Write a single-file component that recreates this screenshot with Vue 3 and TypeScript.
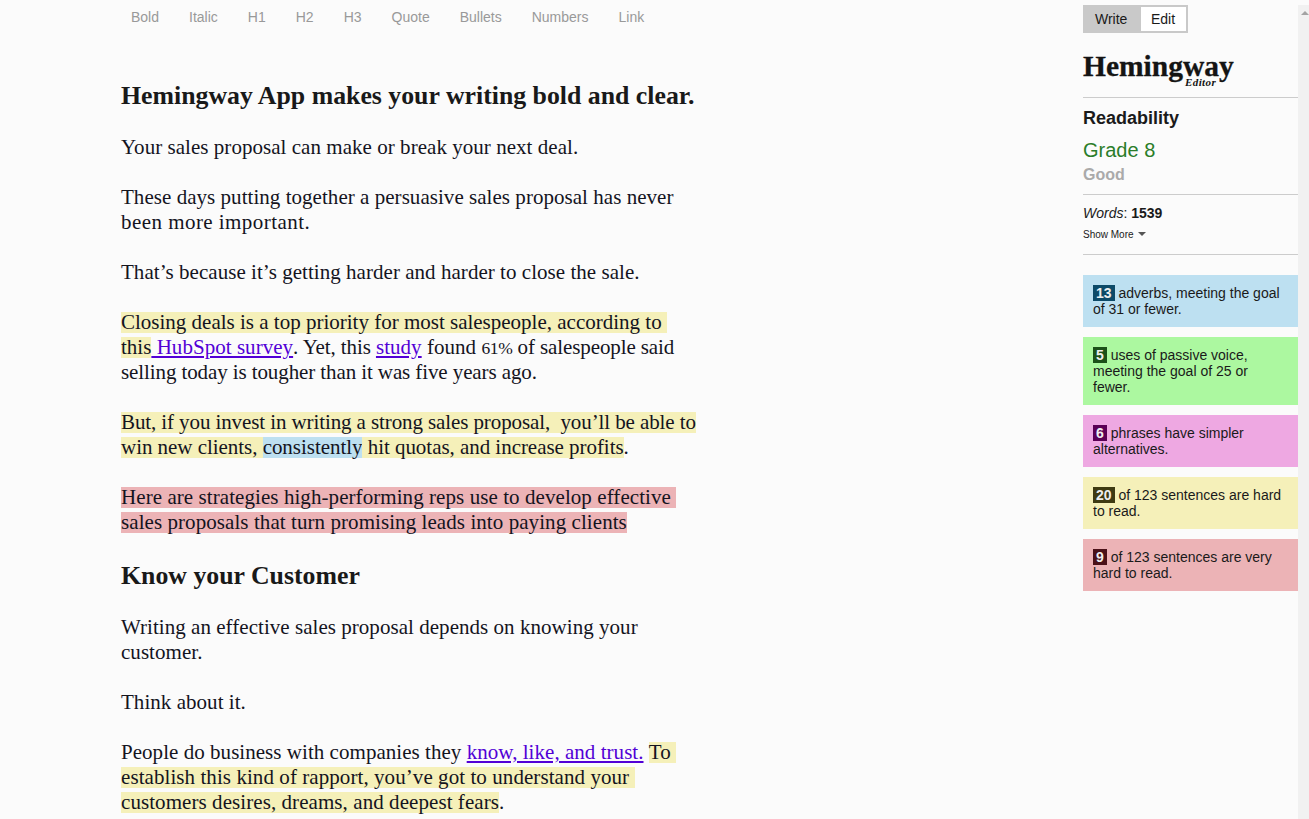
<script setup lang="ts">
const toolbar: string[] = ['Bold', 'Italic', 'H1', 'H2', 'H3', 'Quote', 'Bullets', 'Numbers', 'Link']
interface Stat { cls: string; n: string; text: string }
const stats: Stat[] = [
  { cls: 'blue', n: '13', text: ' adverbs, meeting the goal of 31 or fewer.' },
  { cls: 'green', n: '5', text: ' uses of passive voice, meeting the goal of 25 or fewer.' },
  { cls: 'purple', n: '6', text: ' phrases have simpler alternatives.' },
  { cls: 'yellow', n: '20', text: ' of 123 sentences are hard to read.' },
  { cls: 'red', n: '9', text: ' of 123 sentences are very hard to read.' }
]
</script>

<template>
  <div class="page">
    <main class="main">
      <nav class="toolbar">
        <span v-for="t in toolbar" :key="t" class="tool">{{ t }}</span>
      </nav>
      <article class="doc">
        <h1>Hemingway App makes your writing bold and clear.</h1>
        <p>Your sales proposal can make or break your next deal.</p>
        <p>These days putting together a persuasive sales proposal has never<br /><span class="loose">been more important.</span></p>
        <p>That’s because it’s getting harder and harder to close the sale.</p>
        <p><span class="y even">Closing deals is a top priority for most salespeople, according to&nbsp;<br />this</span><a> HubSpot survey</a><span class="tight">. Yet, this </span><a>study</a> found <span class="fig">61%</span><span class="tight"> of salespeople said</span><br /><span class="tight">selling today is tougher than it was five years ago.</span></p>
        <p><span class="y tight">But, if you invest in writing a strong sales proposal,&nbsp; you’ll be able to<br /></span><span class="y even2">win new clients, </span><span class="b even2">consistently</span><span class="y even2"> hit quotas, and increase profits</span>.</p>
        <p><span class="r wide">Here are strategies high-performing reps use to develop effective&nbsp;<br />sales proposals that turn promising leads into paying clients</span></p>
        <h1>Know your Customer</h1>
        <p>Writing an effective sales proposal depends on knowing your<br />customer.</p>
        <p>Think about it.</p>
        <p>People do business with companies they <a>know, like, and trust.</a> <span class="y wide">To&nbsp;<br />establish this kind of rapport, you’ve got to understand your&nbsp;<br />customers desires, dreams, and deepest fears</span>.</p>
      </article>
    </main>
    <aside class="side">
      <div class="switch"><span class="write">Write</span><span class="edit">Edit</span></div>
      <div class="logo">Hemingway<em>Editor</em></div>
      <section class="block">
        <h4>Readability</h4>
        <div class="grade">Grade 8</div>
        <div class="good">Good</div>
      </section>
      <section class="block words">
        <div><i>Words</i>: <b>1539</b></div>
        <div class="more">Show More <span class="caret"></span></div>
      </section>
      <div class="stats">
        <div v-for="s in stats" :key="s.cls" class="stat" :class="s.cls"><span class="num">{{ s.n }}</span>{{ s.text }}</div>
      </div>
    </aside>
    <div class="scrollbar"><span class="up"></span></div>
  </div>
</template>

<style>
html, body { margin: 0; height: 100%; overflow: hidden; background: #fbfbfb; }
</style>

<style scoped>
.page {
  position: relative;
  height: 819px;
  overflow: hidden;
  background: #fbfbfb;
  display: flex;
  font-family: "Liberation Sans", Arial, sans-serif;
  color: #1a1a1a;
}
.main { width: 1083px; flex: none; padding-left: 121px; box-sizing: border-box; }
.toolbar { display: flex; height: 34px; align-items: center; padding-left: 10px; gap: 30px; font-size: 14px; color: #999; }
.doc { font-family: "Liberation Serif", serif; font-size: 21px; line-height: 25px; letter-spacing: 0.04px; color: #14141e; width: 620px; white-space: nowrap; padding-top: 35px; }
.doc h1 { margin: -11px 0 25px; font-size: 25.8px; line-height: 54px; font-weight: 700; color: #191919; height: 54px; letter-spacing: 0; }
.doc h1:first-child { margin-top: 0; }
.doc h1 + p { margin-top: -13px; }
.doc p { margin: 0 0 25px; }
.doc a { color: #5200d6; text-decoration: underline; }
.fig { font-size: 17.5px; line-height: 1; letter-spacing: -0.4px; }
.tight { letter-spacing: -0.1px; }
.even { letter-spacing: 0; }
.even2 { letter-spacing: -0.04px; }
.wide { letter-spacing: 0.07px; }
.loose { letter-spacing: 0.45px; }
.y, .b, .r {
  background-repeat: no-repeat;
  background-size: 100% 21px;
  background-position: 0 50%;
  -webkit-box-decoration-break: clone;
  box-decoration-break: clone;
}
.y { background-image: linear-gradient(#f5f0b9, #f5f0b9); }
.b { background-image: linear-gradient(#bde0f1, #bde0f1); }
.r { background-image: linear-gradient(#ecb3b6, #ecb3b6); }
.side { width: 215px; flex: none; font-size: 14px; }
.switch { display: flex; width: fit-content; margin-top: 5px; border: 2px solid #c9c9c9; background: #c9c9c9; }
.write, .edit { display: block; height: 24px; line-height: 24px; box-sizing: border-box; padding-left: 10px; }
.write { width: 56px; }
.edit { background: #fff; width: 45px; }
.logo { position: relative; height: 65px; border-bottom: 1px solid #ccc; box-sizing: border-box; font-family: "Liberation Serif", serif; font-weight: 700; font-size: 29.5px; line-height: 34px; padding-top: 16px; color: #141414; -webkit-text-stroke: 0.3px #141414; }
.logo em { position: absolute; left: 102px; top: 43px; font-size: 11px; line-height: 12px; letter-spacing: 0.4px; -webkit-text-stroke: 0; }
.block { border-bottom: 1px solid #ccc; }
.block h4 { margin: 0; padding-top: 10px; font-size: 18px; line-height: 21px; font-weight: 700; }
.grade { margin-top: 10px; color: #2a7d2a; font-size: 20px; line-height: 23px; }
.good { color: #aaa; font-weight: 700; font-size: 16px; line-height: 18px; margin-top: 4px; padding-bottom: 10px; }
.words { padding-top: 10px; height: 49px; }
.more { font-size: 10px; margin-top: 8px; line-height: 12px; }
.caret { display: inline-block; width: 0; height: 0; margin-left: 2px; vertical-align: 2px; border: 4px solid transparent; border-bottom: 0; border-top-color: #555; }
.stats { margin-top: 20px; display: flex; flex-direction: column; gap: 10px; }
.stat { padding: 10px; line-height: 16px; }
.num { display: inline-block; padding: 0 3px; color: #eee; font-weight: 700; }
.blue { background: #bde0f1; } .blue .num { background: #0d4a68; }
.green { background: #acf8a0; } .green .num { background: #1b5018; }
.purple { background: #eea8e2; } .purple .num { background: #5a0055; }
.yellow { background: #f5f0b9; } .yellow .num { background: #3e3a12; }
.red { background: #ecb3b6; } .red .num { background: #4a1118; }
.scrollbar { position: absolute; right: 0; top: 5px; bottom: 0; width: 11px; background: #f1f1f1; }
.up { position: absolute; left: 3px; top: 6px; border: 4px solid transparent; border-top: 0; border-bottom-color: #a3a3a3; }
</style>
